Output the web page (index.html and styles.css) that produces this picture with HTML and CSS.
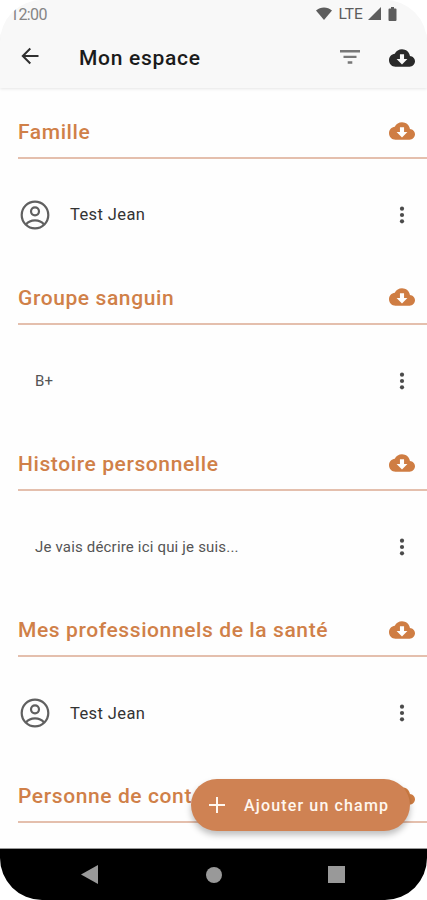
FILE: index.html
```html
<!DOCTYPE html>
<html lang="fr">
<head>
<meta charset="utf-8">
<title>Mon espace</title>
<link rel="stylesheet" href="styles.css">
</head>
<body>
<svg class="defs" width="0" height="0" aria-hidden="true">
  <symbol id="cloud" viewBox="0 0 24 24"><path fill-rule="evenodd" d="M19.35 10.04C18.67 6.59 15.64 4 12 4 9.11 4 6.6 5.64 5.35 8.04 2.34 8.36 0 10.91 0 14c0 3.31 2.69 6 6 6h13c2.76 0 5-2.24 5-5 0-2.64-2.05-4.78-4.65-4.96zM17 13l-5 5-5-5h3.100V8.500h3.800V13z"/></symbol>
  <symbol id="person" viewBox="0 0 30 30"><g fill="none" stroke="currentColor" stroke-width="2.2"><circle cx="15" cy="15" r="13.3"/><circle cx="15" cy="11.3" r="4"/><path d="M6 24.5C8.200 21.600 11.500 20.400 15 20.400s6.800 1.200 9 4.100"/></g></symbol>
  <symbol id="more" viewBox="0 0 6 18"><circle cx="3" cy="2.700" r="2.100"/><circle cx="3" cy="9" r="2.100"/><circle cx="3" cy="15.300" r="2.100"/></symbol>
</svg>
<div class="phone">
  <header class="top">
    <div class="status">
      <span class="time">12:00</span>
      <span class="signals">
        <svg class="wifi" viewBox="0 0 16 13"><path d="M0 3.500C4.500-.5 11.500-.5 16 3.500L8 13z"/></svg>
        <span class="lte">LTE</span>
        <svg class="cell" viewBox="0 0 13 13"><path d="M13 0v13H0z"/></svg>
        <svg class="battery" viewBox="0 0 8 14"><path d="M2.500 0h3v1.500H7a1 1 0 0 1 1 1V13a1 1 0 0 1-1 1H1a1 1 0 0 1-1-1V2.500a1 1 0 0 1 1-1h1.500z"/></svg>
      </span>
    </div>
    <div class="appbar">
      <svg class="back" viewBox="0 0 18 18"><path d="M17.500 9H1.800M9.300 1.500L1.800 9l7.500 7.500"/></svg>
      <h1>Mon espace</h1>
      <svg class="filter" viewBox="0 0 20 14"><path d="M0 0h20v2.500H0zM3.500 5.700h13v2.400h-13zM7.700 11.300h4.600v2.400H7.700z"/></svg>
      <svg class="cloud dark"><use href="#cloud"/></svg>
    </div>
  </header>
  <main>
    <section>
      <div class="heading"><h2>Famille</h2><svg class="cloud"><use href="#cloud"/></svg></div>
      <div class="row contact"><svg class="person"><use href="#person"/></svg><span class="name">Test Jean</span><svg class="more"><use href="#more"/></svg></div>
    </section>
    <section>
      <div class="heading"><h2>Groupe sanguin</h2><svg class="cloud"><use href="#cloud"/></svg></div>
      <div class="row"><span class="note">B+</span><svg class="more"><use href="#more"/></svg></div>
    </section>
    <section>
      <div class="heading"><h2>Histoire personnelle</h2><svg class="cloud"><use href="#cloud"/></svg></div>
      <div class="row"><span class="note">Je vais décrire ici qui je suis...</span><svg class="more"><use href="#more"/></svg></div>
    </section>
    <section>
      <div class="heading"><h2>Mes professionnels de la santé</h2><svg class="cloud"><use href="#cloud"/></svg></div>
      <div class="row contact"><svg class="person"><use href="#person"/></svg><span class="name">Test Jean</span><svg class="more"><use href="#more"/></svg></div>
    </section>
    <section>
      <div class="heading"><h2>Personne de cont</h2><svg class="cloud"><use href="#cloud"/></svg></div>
    </section>
  </main>
  <button class="fab"><svg viewBox="0 0 16 16"><path d="M8 0v16M0 8h16"/></svg><span>Ajouter un champ</span></button>
  <nav>
    <svg class="nav-back" viewBox="0 0 17 19"><path d="M17 0v19L0 9.500z"/></svg>
    <span class="nav-home"></span>
    <span class="nav-recent"></span>
  </nav>
</div>
</body>
</html>
```
FILE: styles.css
```css
* { box-sizing: border-box; }
body { margin: 0; background: #fff; font-family: Roboto, "Liberation Sans", sans-serif; }
svg { display: block; flex: none; fill: currentColor; }
h1, h2 { margin: 0; white-space: nowrap; }
.defs { position: absolute; }
.phone { position: relative; width: 427px; height: 900px; display: flex; flex-direction: column; overflow: hidden; border-radius: 42px; background: #fefefe; }
.top { height: 88px; flex: none; background: #f8f8f8; box-shadow: 0 1px 3px rgba(0, 0, 0, .1); }
.status { height: 28px; padding: 0 30px 0 10px; display: flex; align-items: center; justify-content: space-between; color: #5d5d5d; }
.time { font-size: 16px; letter-spacing: -.6px; color: #858585; }
.signals { display: flex; align-items: center; margin-top: -1px; }
.wifi { width: 16px; height: 13px; }
.lte { margin-left: 6px; font-size: 15.500px; letter-spacing: .1px; }
.cell { width: 13px; height: 13px; margin-left: 5px; }
.battery { width: 9px; height: 14px; margin-left: 7px; }
.appbar { height: 60px; padding: 0 12px 0 21px; display: flex; align-items: center; }
.back { width: 18px; height: 18px; margin-bottom: 4px; fill: none; stroke: #303030; stroke-width: 2; }
h1 { margin-left: 40px; flex: 1; font-size: 21px; font-weight: 500; letter-spacing: .7px; color: #1b1b1b; }
.filter { width: 20px; height: 14px; margin: 0 29px 2px 0; color: #777; }
.cloud { width: 26px; height: 26px; margin-bottom: 1px; color: #cf7d43; }
.dark { color: #292929; margin-bottom: 1px; }
main { flex: 1; min-height: 0; overflow: hidden; padding: 18.500px 0 0 18px; }
section { height: 166.200px; }
.heading { height: 52px; padding-right: 12.500px; display: flex; align-items: center; justify-content: space-between; border-bottom: 2px solid #e4bfad; }
h2 { font-size: 21px; font-weight: 500; letter-spacing: .6px; color: #d08048; }
.row { height: 112.500px; padding: 0 22.500px 0 17px; display: flex; align-items: center; }
.contact { padding-left: 2px; }
.person { width: 30px; height: 30px; color: #606060; }
.name { margin-left: 20px; font-size: 16.500px; letter-spacing: .4px; color: #333; }
.note { font-size: 15px; letter-spacing: .18px; color: #555; }
.more { width: 6px; height: 18px; margin-left: auto; color: #4b4b4b; }
.fab { position: absolute; left: 191px; top: 779px; width: 219px; height: 52px; padding: 0 0 0 18px; display: flex; align-items: center; gap: 19px; border: 0; border-radius: 26px; background: #cf8253; color: #fff7ef; font: 500 16px Roboto, sans-serif; letter-spacing: 1.150px; white-space: nowrap; box-shadow: 0 4px 6px rgba(0, 0, 0, .25); }
.fab svg { width: 16px; height: 16px; stroke: currentColor; stroke-width: 2; }
nav { height: 52px; flex: none; padding: 0 82px 0 81px; display: flex; align-items: center; justify-content: space-between; background: #000; border-top: 1px solid #999; color: #999; }
.nav-back { width: 17px; height: 19px; }
.nav-home { width: 16px; height: 16px; margin-left: 1px; border-radius: 50%; background: #999; }
.nav-recent { width: 17px; height: 17px; background: #999; }
```
